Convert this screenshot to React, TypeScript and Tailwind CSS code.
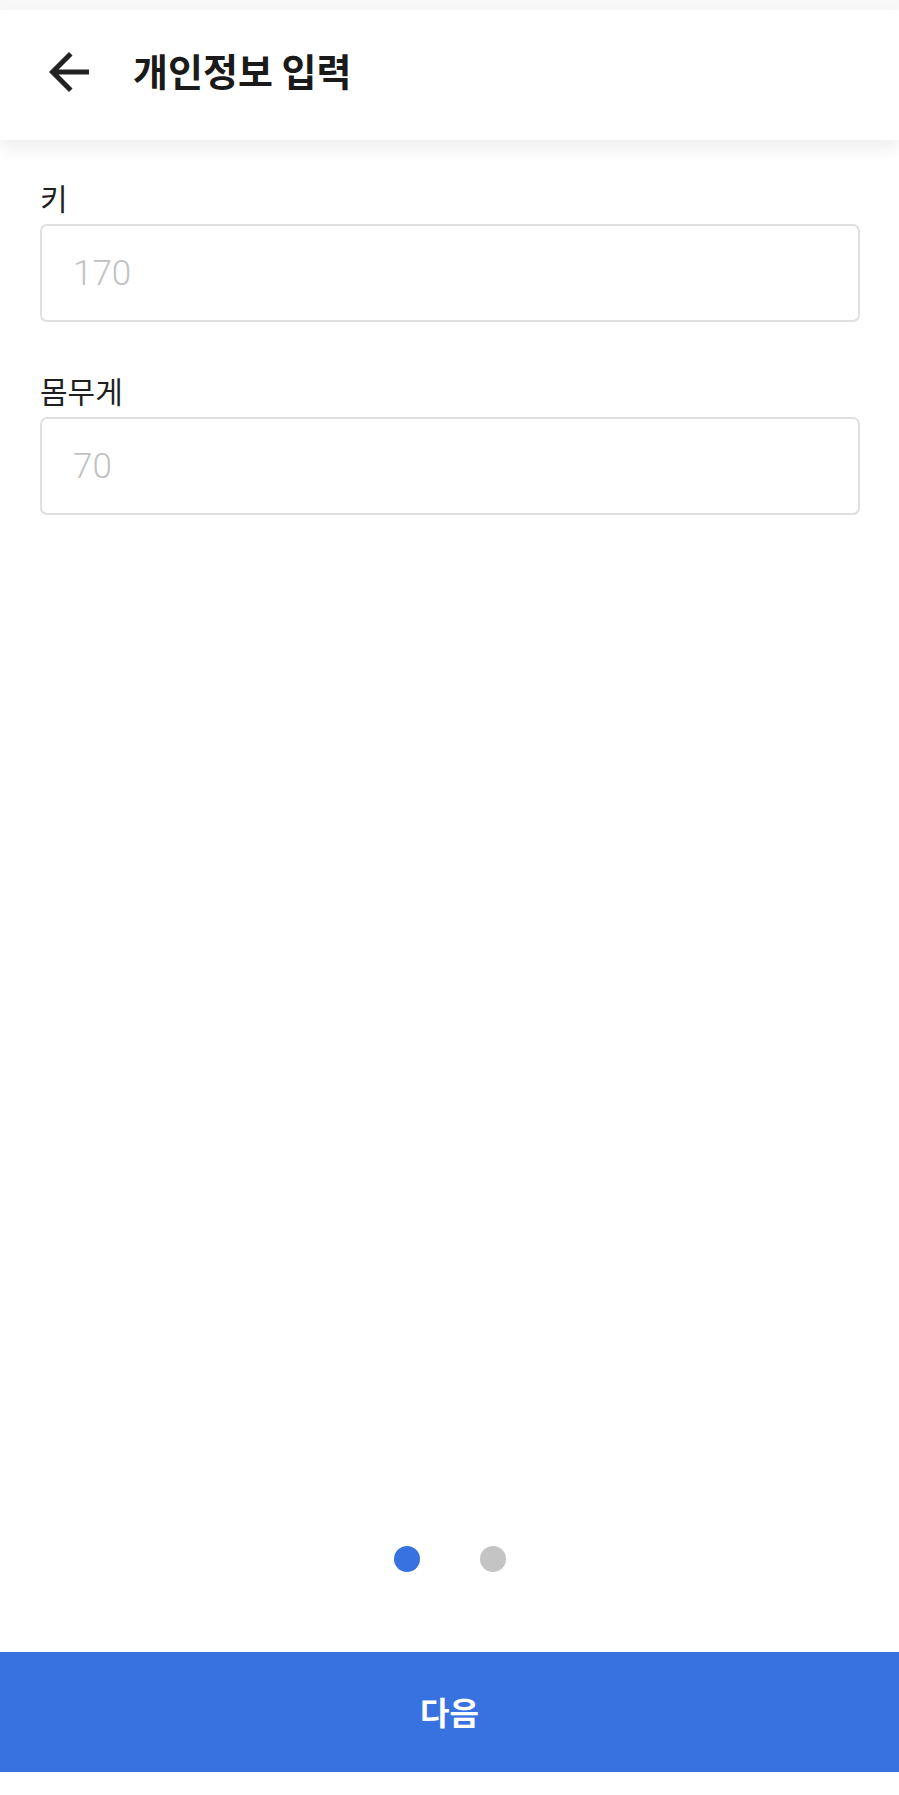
import React from "react";

const kr = { fontFamily: '"Noto Sans CJK KR", "Noto Sans", sans-serif' };

function Field({ label, placeholder, top }: { label: string; placeholder: string; top: string }) {
  return (
    <div className={`flex flex-col ${top}`}>
      <div className="h-[40px] leading-[40px] text-[30px] text-[#1f1f1f]" style={kr}>
        {label}
      </div>
      <input
        className="mt-[7px] h-[98px] w-full rounded-[7px] border-2 border-[#e0e0e0] bg-white px-[31px] text-[35px] font-light text-[#333] outline-none placeholder:text-[#c2c2c2] font-['Roboto',sans-serif]"
        placeholder={placeholder}
      />
    </div>
  );
}

export default function App() {
  return (
    <div className="flex h-[1795px] w-[899px] flex-col overflow-hidden bg-white">
      <div className="h-[10px] bg-[#f8f8f8]" />
      <header className="relative z-10 flex h-[130px] items-center bg-white pl-[39px] shadow-[0_8px_16px_rgba(0,0,0,0.07)]">
        <svg width="60" height="60" viewBox="0 0 24 24" className="mt-[-6px] text-[#222]" fill="currentColor">
          <path d="M20 11H7.83l5.59-5.59L12 4l-8 8 8 8 1.41-1.41L7.83 13H20v-2z" />
        </svg>
        <h1 className="ml-[34px] mt-[-12px] text-[38px] font-bold text-[#1a1a1a]" style={kr}>
          개인정보 입력
        </h1>
      </header>
      <main className="flex flex-col px-[40px] pt-[37px]" style={{ width: 899 }}>
        <div className="w-[820px]">
          <Field label="키" placeholder="170" top="" />
          <Field label="몸무게" placeholder="70" top="mt-[48px]" />
        </div>
      </main>
      <div className="flex-1" />
      <div className="flex items-center justify-center gap-[60px] pl-[1px]">
        <span className="h-[26px] w-[26px] rounded-full bg-[#3871e0]" />
        <span className="h-[26px] w-[26px] rounded-full bg-[#c4c4c4]" />
      </div>
      <button
        className="mt-[80px] flex h-[120px] w-full items-center justify-center bg-[#3872e0] pb-[2px] text-[32px] font-bold text-white"
        style={kr}
      >
        다음
      </button>
      <div className="h-[23px] bg-white" />
    </div>
  );
}
